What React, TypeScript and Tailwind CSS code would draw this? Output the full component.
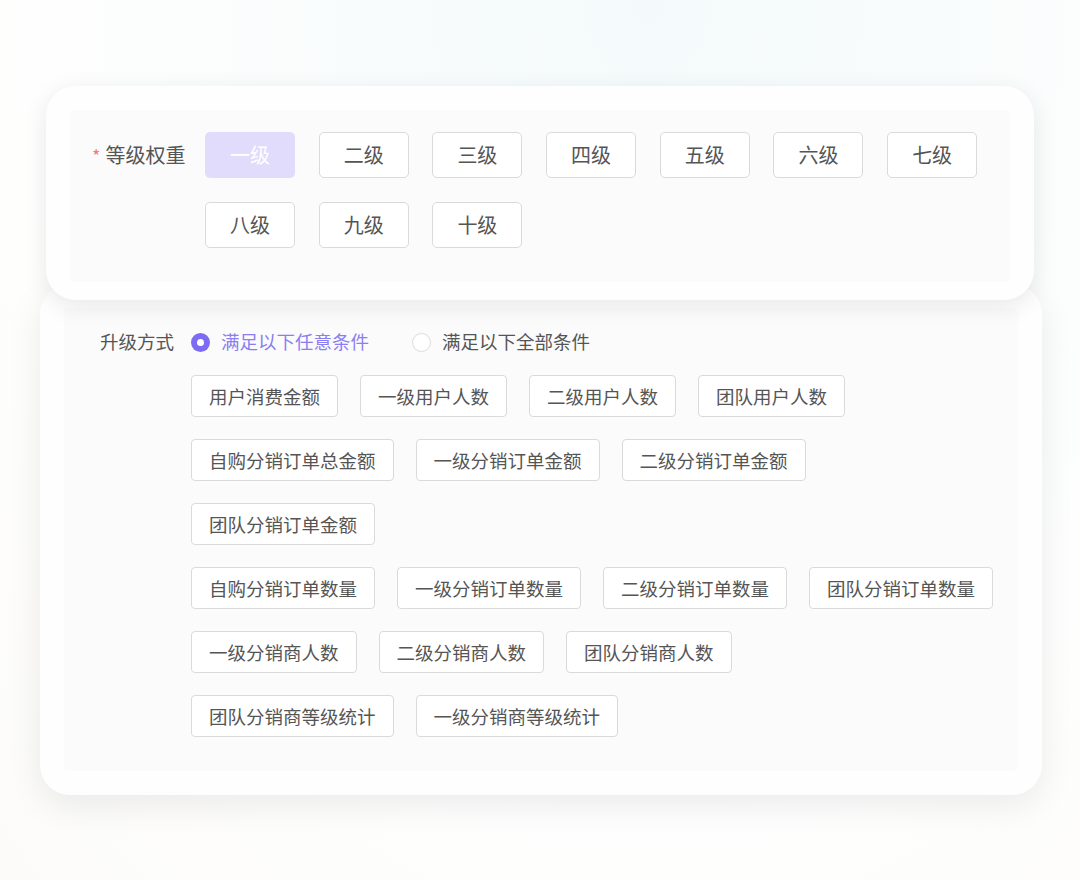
const levels = ["一级", "二级", "三级", "四级", "五级", "六级", "七级", "八级", "九级", "十级"];

const groups: string[][] = [
  ["用户消费金额", "一级用户人数", "二级用户人数", "团队用户人数"],
  ["自购分销订单总金额", "一级分销订单金额", "二级分销订单金额", "团队分销订单金额"],
  ["自购分销订单数量", "一级分销订单数量", "二级分销订单数量", "团队分销订单数量"],
  ["一级分销商人数", "二级分销商人数", "团队分销商人数"],
  ["团队分销商等级统计", "一级分销商等级统计"],
];

function LevelButton({ label, active }: { label: string; active?: boolean }) {
  return (
    <div
      className={
        active
          ? "w-[90px] h-[46px] rounded-[5px] bg-[#e1dcfb] text-white flex items-center justify-center text-[20px]"
          : "w-[90px] h-[46px] rounded-[5px] border border-[#dadada] bg-white text-[#555] flex items-center justify-center text-[20px]"
      }
    >
      {label}
    </div>
  );
}

function Tag({ label }: { label: string }) {
  return (
    <div className="h-[42px] px-[17px] rounded-[4px] border border-[#dadada] bg-white text-[#555] flex items-center text-[18.5px] leading-none">
      {label}
    </div>
  );
}

function Radio({ label, checked }: { label: string; checked?: boolean }) {
  return (
    <div className="flex items-center gap-[11px]">
      {checked ? (
        <span className="w-[19px] h-[19px] rounded-full bg-[#7b6cf2] flex items-center justify-center">
          <span className="w-[7px] h-[7px] rounded-full bg-white" />
        </span>
      ) : (
        <span className="w-[19px] h-[19px] rounded-full border border-[#dcdcdc] bg-white" />
      )}
      <span className={checked ? "text-[#8a7ef2] text-[18.5px]" : "text-[#555] text-[18.5px]"}>{label}</span>
    </div>
  );
}

export default function App() {
  return (
    <div
      className="h-[880px] w-[1080px] overflow-hidden bg-[radial-gradient(ellipse_at_60%_0%,#f4fafb_0%,#fbfdfd_45%,#fefefd_70%,#fcfbfa_100%)] pt-[86px]"
      style={{ fontFamily: '"Noto Sans CJK SC", "Noto Sans", sans-serif' }}
    >
      <div className="relative z-10 ml-[46px] w-[988px] rounded-[30px] bg-[#fefefe] shadow-[0_6px_24px_rgba(0,0,0,0.09)] px-[24px] pt-[24px] pb-[18px]">
        <div className="bg-[#fbfbfb] rounded-[4px] pt-[22px] pb-[34px] pl-[22px] flex">
          <div className="w-[113px] h-[46px] flex items-center text-[20px] text-[#555]">
            <span className="text-[#f07a7a] mr-[5px] text-[18px]">*</span>
            等级权重
          </div>
          <div className="flex flex-wrap gap-x-[23.7px] gap-y-[24px] w-[780px]">
            {levels.map((l, i) => (
              <LevelButton key={l} label={l} active={i === 0} />
            ))}
          </div>
        </div>
      </div>

      <div className="-mt-[16px] ml-[40px] w-[1002px] rounded-[30px] bg-[#fefefe] shadow-[0_10px_34px_rgba(0,0,0,0.08)] px-[24px] pt-[24px] pb-[24px]">
        <div className="bg-[#fbfbfb] rounded-[4px] pt-[23px] pb-[34px] pl-[36px] flex">
          <div className="w-[91px] h-[22px] flex items-center text-[18.5px] text-[#555]">升级方式</div>
          <div className="flex flex-col gap-[22px] w-[809px]">
            <div className="h-[22px] flex items-center gap-[43px]">
              <Radio label="满足以下任意条件" checked />
              <Radio label="满足以下全部条件" />
            </div>
            {groups.map((g, i) => (
              <div key={i} className="flex flex-wrap gap-[22px]">
                {g.map((t) => (
                  <Tag key={t} label={t} />
                ))}
              </div>
            ))}
          </div>
        </div>
      </div>
    </div>
  );
}
